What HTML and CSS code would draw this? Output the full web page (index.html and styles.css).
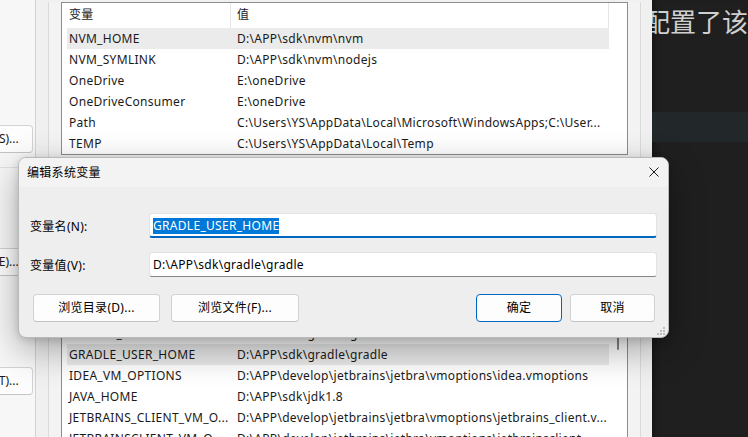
FILE: index.html
```html
<!DOCTYPE html>
<html lang="zh-CN">
<head>
<meta charset="utf-8">
<title>编辑系统变量</title>
<link rel="stylesheet" href="styles.css">
</head>
<body>
<div class="screen">
  <div class="sysprops">
    <div class="sp-btn b1">设置(S)...</div>
    <div class="sp-line l1"></div>
    <div class="sp-btn b2">设置(E)...</div>
    <div class="sp-btn b3">设置(T)...</div>
  </div>

  <div class="envwin">
    <div class="group">
      <div class="list upper">
        <div class="row head"><span class="c1">变量</span><span class="c2">值</span></div>
        <div class="row sel"><span class="c1">NVM_HOME</span><span class="c2">D:\APP\sdk\nvm\nvm</span></div>
        <div class="row"><span class="c1">NVM_SYMLINK</span><span class="c2">D:\APP\sdk\nvm\nodejs</span></div>
        <div class="row"><span class="c1">OneDrive</span><span class="c2">E:\oneDrive</span></div>
        <div class="row"><span class="c1">OneDriveConsumer</span><span class="c2">E:\oneDrive</span></div>
        <div class="row"><span class="c1">Path</span><span class="c2">C:\Users\YS\AppData\Local\Microsoft\WindowsApps;C:\User...</span></div>
        <div class="row"><span class="c1">TEMP</span><span class="c2">C:\Users\YS\AppData\Local\Temp</span></div>
      </div>

      <div class="list lower">
        <div class="row head"></div>
        <div class="row"></div>
        <div class="row"></div>
        <div class="row"></div>
        <div class="row"></div>
        <div class="row"></div>
        <div class="row"><span class="c1">GRADLE_HOME</span><span class="c2">D:\APP\sdk\gradle\gradle-7.5</span></div>
        <div class="row sel"><span class="c1">GRADLE_USER_HOME</span><span class="c2">D:\APP\sdk\gradle\gradle</span></div>
        <div class="row"><span class="c1">IDEA_VM_OPTIONS</span><span class="c2">D:\APP\develop\jetbrains\jetbra\vmoptions\idea.vmoptions</span></div>
        <div class="row"><span class="c1">JAVA_HOME</span><span class="c2">D:\APP\sdk\jdk1.8</span></div>
        <div class="row"><span class="c1">JETBRAINS_CLIENT_VM_O...</span><span class="c2">D:\APP\develop\jetbrains\jetbra\vmoptions\jetbrains_client.v...</span></div>
        <div class="row"><span class="c1">JETBRAINSCLIENT_VM_O...</span><span class="c2">D:\APP\develop\jetbrains\jetbra\vmoptions\jetbrainsclient...</span></div>
        <div class="thumb"></div>
      </div>
    </div>
  </div>

  <div class="dark">
    <div class="dark-text">配置了该项</div>
    <div class="band"></div>
  </div>

  <div class="dialog">
    <div class="titlebar">
      <span class="title">编辑系统变量</span>
      <svg class="close" width="10" height="10" viewBox="0 0 10 10"><path d="M0.5 0.5 L9.5 9.5 M9.5 0.5 L0.5 9.5" stroke="#1a1a1a" stroke-width="1" fill="none"/></svg>
    </div>
    <div class="body">
      <div class="field">
        <label class="lbl">变量名(N):</label>
        <div class="input focus"><span class="selected">GRADLE_USER_HOME</span></div>
      </div>
      <div class="field">
        <label class="lbl">变量值(V):</label>
        <div class="input"><span>D:\APP\sdk\gradle\gradle</span></div>
      </div>
      <div class="actions">
        <div class="left-btns">
          <div class="btn w1">浏览目录(D)...</div>
          <div class="btn w2">浏览文件(F)...</div>
        </div>
        <div class="right-btns">
          <div class="btn ok">确定</div>
          <div class="btn cancel">取消</div>
        </div>
      </div>
    </div>
    <svg class="grip" width="8" height="8" viewBox="0 0 8 8"><g fill="#bdbdbd"><rect x="6" y="0" width="2" height="2"/><rect x="3" y="3" width="2" height="2"/><rect x="6" y="3" width="2" height="2"/><rect x="0" y="6" width="2" height="2"/><rect x="3" y="6" width="2" height="2"/><rect x="6" y="6" width="2" height="2"/></g></svg>
  </div>
</div>
</body>
</html>
```

FILE: styles.css
```css
* { box-sizing: border-box; }

html, body {
  margin: 0;
  padding: 0;
}

body {
  font-family: "Noto Sans", "Noto Sans CJK SC", sans-serif;
  font-size: 12px;
  letter-spacing: 0.3px;
  color: #1a1a1a;
  background: #1f1f1f;
}

.screen {
  position: relative;
  width: 748px;
  height: 437px;
  overflow: hidden;
  display: flex;
}

/* System Properties window behind (left edge) */
.sysprops {
  width: 36px;
  flex: none;
  background: #f7f7f7;
  border-right: 1px solid #d2d2d2;
  display: flex;
  flex-direction: column;
  align-items: flex-end;
  overflow: hidden;
  padding-right: 2px;
}

.sp-btn {
  flex: none;
  width: 76px;
  height: 28px;
  line-height: 26px;
  text-align: center;
  background: #fdfdfd;
  border: 1px solid #d3d3d3;
  border-bottom-color: #c4c4c4;
  border-radius: 4px;
  white-space: nowrap;
  letter-spacing: 0;
}
.b1 { margin-top: 125px; }
.sp-line { align-self: stretch; margin-top: 14px; height: 1px; background: #e1e1e1; }
.b2 { margin-top: 80px; }
.b3 { margin-top: 91px; }

/* Environment Variables window */
.envwin {
  width: 616px;
  flex: none;
  background: #f0f0f0;
  padding: 0 11px 0 12px;
}

.group {
  height: 100%;
  background: #f3f3f3;
  border-left: 1px solid #dadada;
  border-right: 1px solid #dadada;
  padding: 0 12px;
}

.list {
  position: relative;
  width: 567px;
  background: #fff;
  border: 1px solid #8d8d8d;
  overflow: hidden;
}

.upper { margin-top: 2px; }
.lower { margin-top: 37px; height: 300px; border-bottom: none; }

.row {
  display: flex;
  height: 21px;
  line-height: 21px;
  margin-left: 5px;
  width: 542px;
  white-space: nowrap;
}
.row.head { height: 25px; line-height: 24px; }
.row.sel { background: #ebebeb; }

.c1 {
  width: 164px;
  flex: none;
  padding-left: 2px;
  overflow: hidden;
}
.c2 {
  flex: 1;
  padding-left: 6px;
  overflow: hidden;
}
.head .c1 { border-right: 1px solid #e5e5e5; }
.head .c2 { border-right: 1px solid #e5e5e5; }

.thumb {
  position: absolute;
  right: 8px;
  top: 118px;
  width: 2px;
  height: 39px;
  border-radius: 1px;
  background: #858585;
}

/* Dark editor on the right */
.dark {
  flex: 1;
  background: #1f1f1f;
  overflow: hidden;
  box-shadow: inset 6px 0 6px -4px rgba(0,0,0,0.35);
}
.dark-text {
  margin-top: 8px;
  font-size: 26px;
  line-height: 26px;
  letter-spacing: 0;
  color: #cfcfcf;
  text-indent: -8px;
  white-space: nowrap;
  font-family: "Noto Sans CJK SC", sans-serif;
}
.band {
  margin-top: 78px;
  height: 30px;
  background: #22272a;
}

/* Dialog */
.dialog {
  position: absolute;
  left: 18px;
  top: 157px;
  width: 651px;
  height: 181px;
  background: #eeeeee;
  border: 1px solid #b9b9b9;
  border-radius: 8px;
  box-shadow: 0 12px 36px rgba(0,0,0,0.32), 0 2px 8px rgba(0,0,0,0.14);
  overflow: hidden;
}

.titlebar {
  height: 29px;
  background: #f3f3f3;
  display: flex;
  align-items: center;
  justify-content: space-between;
  padding: 0 9px 2px 8px;
}
.title { color: #000; }

.body {
  padding: 26px 11px 0 11px;
}

.field {
  display: flex;
  align-items: center;
  margin-bottom: 14px;
}
.field + .field { margin-bottom: 17px; }

.lbl {
  width: 119px;
  flex: none;
  color: #000;
}

.input {
  flex: 1;
  height: 25px;
  background: #fff;
  border: 1px solid #e3e3e3;
  border-bottom: 1px solid #868686;
  border-radius: 3px;
  padding-left: 3px;
  display: flex;
  align-items: center;
  color: #000;
  white-space: nowrap;
}
.input.focus {
  border-bottom: 2px solid #0067c0;
  padding-top: 1px;
}
.selected {
  background: #0078d7;
  color: #fff;
  line-height: 16px;
}

.actions {
  display: flex;
  justify-content: space-between;
  padding: 0 2px 0 3px;
}
.left-btns, .right-btns { display: flex; gap: 11px; }
.right-btns { gap: 8px; }

.btn {
  height: 28px;
  line-height: 26px;
  text-align: center;
  background: #fdfdfd;
  border: 1px solid #d2d2d2;
  border-bottom-color: #c2c2c2;
  border-radius: 4px;
  color: #000;
}
.w1 { width: 127px; }
.w2 { width: 128px; }
.ok { width: 86px; border: 1px solid #0067c0; }
.cancel { width: 85px; }

.grip {
  position: absolute;
  right: 3px;
  bottom: 2px;
}
```
